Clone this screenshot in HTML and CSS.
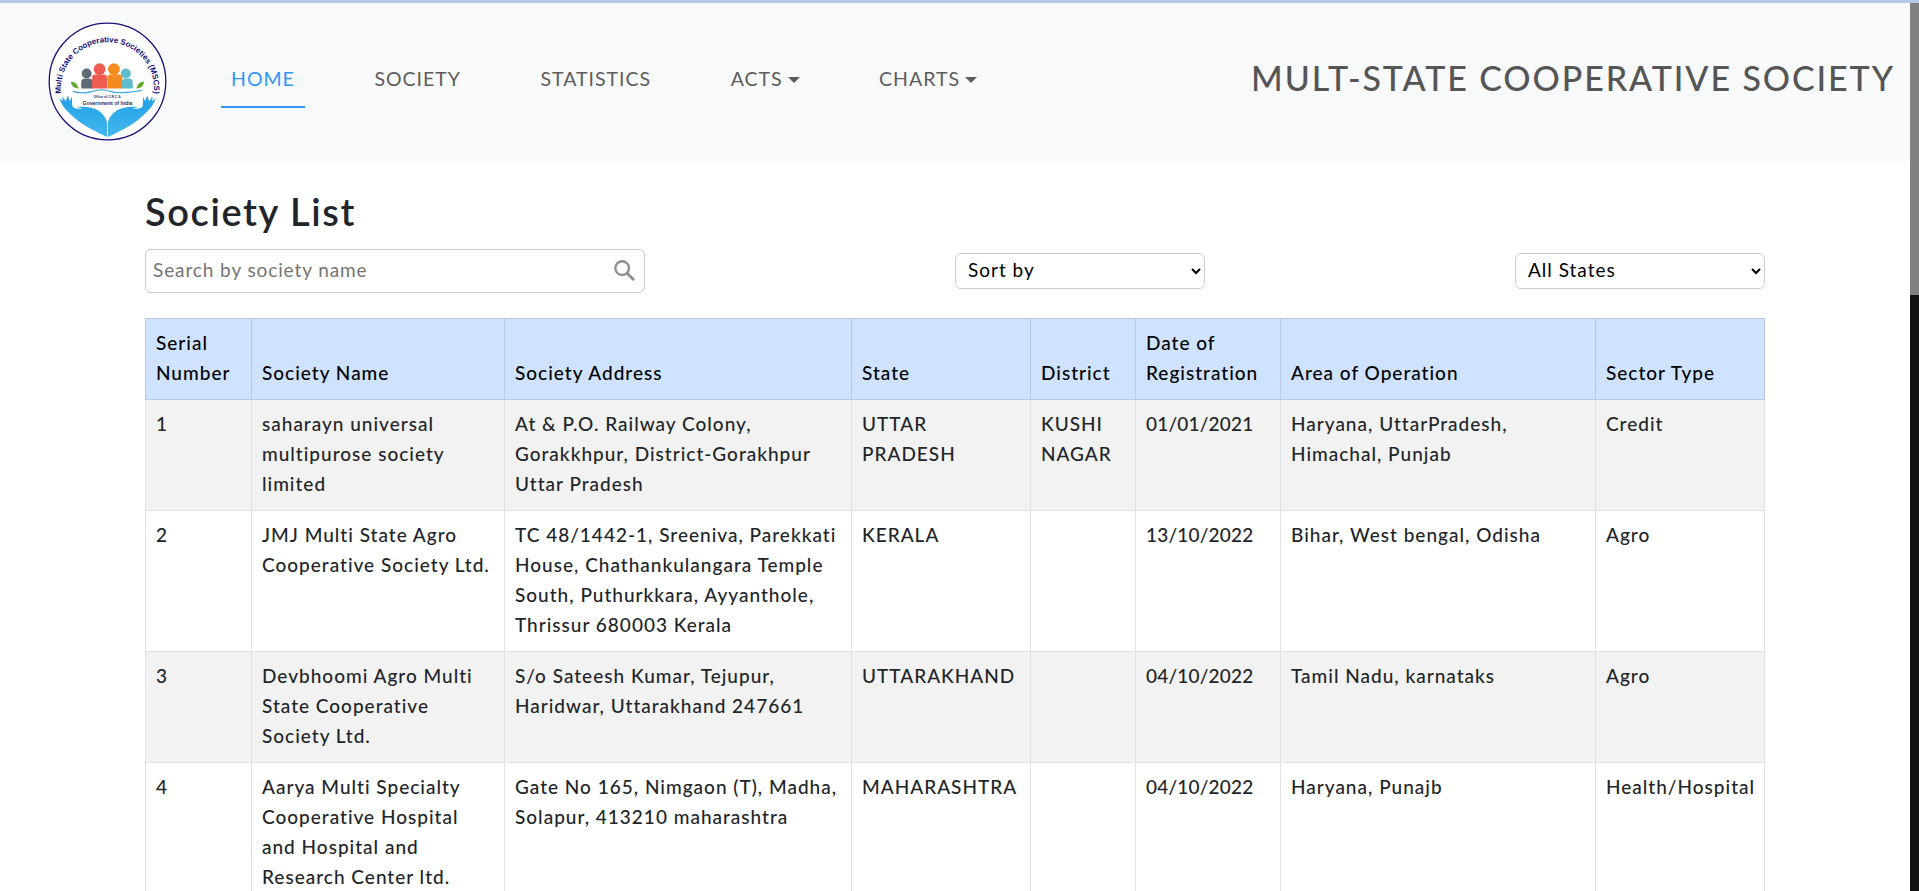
FILE: index.html
```html
<!DOCTYPE html>
<html lang="en">
<head>
<meta charset="utf-8">
<title>Society List</title>
<link rel="stylesheet" href="styles.css">
</head>
<body>
<div class="frame">
<div class="page">
<header class="navbar">
  <svg class="logo" viewBox="0 0 120 120" role="img" aria-label="MSCS logo">
    <defs>
      <path id="arc" d="M14 77 A47 47 0 1 1 106 77"/>
      <linearGradient id="hand" x1="0" y1="0" x2="0" y2="1"><stop offset="0" stop-color="#1f9fe6"/><stop offset="1" stop-color="#45b8ee"/></linearGradient>
    </defs>
    <circle cx="60" cy="60" r="58.8" fill="#fff" stroke="#15107a" stroke-width="1.3"/>
    <text class="logo-ring"><textPath href="#arc" startOffset="50%" text-anchor="middle">Multi State Cooperative Societies (MSCS)</textPath></text>
    <circle cx="39" cy="52" r="5" fill="#5e6b75"/><path d="M33.500 67V61q0-4 4-4h3q5 0 5 4v6z" fill="#5e6b75"/>
    <circle cx="52" cy="47.500" r="6" fill="#ef5b50"/><path d="M44.500 67V56q0-3 3-3h9q3 0 3 3v11z" fill="#ef5b50"/>
    <circle cx="66.500" cy="47.500" r="6" fill="#f58b1f"/><path d="M60 67V56q0-3 3-3h9q3 0 3 3v11z" fill="#f58b1f"/>
    <circle cx="78.500" cy="52" r="5" fill="#5fbccb"/><path d="M74.500 67V61q0-4 4-4h3q4 0 4 4v6z" fill="#5fbccb"/>
    <path d="M23 60q6 0 8 7q-7 0-8-7zM97 60q-6 0-8 7q7 0 8-7z" fill="#62a82e"/>
    <path d="M25 70q10 3 20 0t18 0t32-1" fill="none" stroke="#4aa9e0" stroke-width="1.2"/>
    <text class="logo-sm" x="60" y="76.500" text-anchor="middle">Office of C.R.C.S.</text>
    <text class="logo-md" x="60" y="84" text-anchor="middle">Government of India</text>
    <path d="M59.500 116C50 111 36 105 26 96C19 90 14 85 11.500 77L15 80L14.500 75L18 80L20 74L22 80L24 75L24.500 85C27 88 31 88 35 87L29 86C42 84 56 88 59.500 101z" fill="url(#hand)"/>
    <path d="M60.500 116C70 111 84 105 94 96C101 90 106 85 108.500 77L105 80L105.500 75L102 80L100 74L98 80L96 75L95.500 85C93 88 89 88 85 87L91 86C78 84 64 88 60.500 101z" fill="url(#hand)"/>
  </svg>
  <nav class="nav-links">
    <a class="nav-link active" href="#">HOME</a>
    <a class="nav-link" href="#">SOCIETY</a>
    <a class="nav-link" href="#">STATISTICS</a>
    <a class="nav-link caret" href="#">ACTS</a>
    <a class="nav-link caret" href="#">CHARTS</a>
  </nav>
  <div class="brand">MULT-STATE COOPERATIVE SOCIETY</div>
</header>
<main class="content">
  <h1 class="title">Society List</h1>
  <div class="filters">
    <div class="search">
      <input class="search-input" type="text" placeholder="Search by society name">
      <svg class="search-icon" viewBox="0 0 24 24" aria-hidden="true"><circle cx="10" cy="10" r="7.500" fill="none" stroke="#8f8f8f" stroke-width="2.600"/><path d="M15.500 15.500L22 22" stroke="#8f8f8f" stroke-width="3.200" stroke-linecap="round"/></svg>
    </div>
    <select class="pick pick-sort"><option>Sort by</option></select>
    <select class="pick pick-state"><option>All States</option></select>
  </div>
  <table class="societies">
    <colgroup><col class="c1"><col class="c2"><col class="c3"><col class="c4"><col class="c5"><col class="c6"><col class="c7"><col class="c8"></colgroup>
    <thead>
      <tr><th>Serial Number</th><th>Society Name</th><th>Society Address</th><th>State</th><th>District</th><th>Date of Registration</th><th>Area of Operation</th><th>Sector Type</th></tr>
    </thead>
    <tbody>
      <tr><td>1</td><td>saharayn universal multipurose society limited</td><td>At &amp; P.O. Railway Colony, Gorakkhpur, District-Gorakhpur Uttar Pradesh</td><td>UTTAR PRADESH</td><td>KUSHI NAGAR</td><td class="date">01/01/2021</td><td>Haryana, UttarPradesh, Himachal, Punjab</td><td>Credit</td></tr>
      <tr><td>2</td><td>JMJ Multi State Agro Cooperative Society Ltd.</td><td>TC 48/1442-1, Sreeniva, Parekkati House, Chathankulangara Temple South, Puthurkkara, Ayyanthole, Thrissur 680003 Kerala</td><td>KERALA</td><td></td><td class="date">13/10/2022</td><td>Bihar, West bengal, Odisha</td><td>Agro</td></tr>
      <tr><td>3</td><td>Devbhoomi Agro Multi State Cooperative Society Ltd.</td><td>S/o Sateesh Kumar, Tejupur, Haridwar, Uttarakhand 247661</td><td>UTTARAKHAND</td><td></td><td class="date">04/10/2022</td><td>Tamil Nadu, karnataks</td><td>Agro</td></tr>
      <tr><td>4</td><td>Aarya Multi Specialty Cooperative Hospital and Hospital and Research Center ltd.</td><td>Gate No 165, Nimgaon (T), Madha, Solapur, 413210 maharashtra</td><td>MAHARASHTRA</td><td></td><td class="date">04/10/2022</td><td>Haryana, Punajb</td><td>Health/Hospital</td></tr>
    </tbody>
  </table>
</main>
</div>
<div class="scrollbar"><div class="scroll-thumb"></div></div>
</div>
</body>
</html>
```
FILE: styles.css
```css
* { box-sizing: border-box; }
html, body { margin: 0; height: 100%; overflow: hidden; background: #fff; }
body { font-family: "Lato", "Liberation Sans", sans-serif; color: #212529; }
.frame { height: 891px; display: flex; border-top: 3px solid #b6c8ea; }
.page { flex: 1; min-width: 0; overflow: hidden; }
.scrollbar { width: 9px; background: #111; }
.scroll-thumb { height: 292px; background: #808080; }
.navbar { height: 158px; background: #f8f9fa; display: flex; align-items: center; padding: 0 15px 0 48px; }
.logo { width: 119px; height: 119px; flex: none; margin-top: -2px; }
.logo-ring { font: 700 8px "Liberation Sans", sans-serif; fill: #15107a; }
.logo-sm { font: 700 3.4px "Liberation Sans", sans-serif; fill: #23306b; }
.logo-md { font: 700 5.2px "Liberation Sans", sans-serif; fill: #23306b; }
.nav-links { display: flex; margin-left: 54px; gap: 59.5px; margin-top: -7px; }
.nav-link { display: block; padding: 17px 10px 15px; font-size: 19.5px; line-height: 24px; letter-spacing: 1px; color: #5c5c5c; text-decoration: none; border-bottom: 2px solid transparent; }
.nav-link.active { color: #3296f5; border-bottom-color: #3296f5; }
.caret::after { content: ""; display: inline-block; margin-left: 5px; vertical-align: 3px; border-top: 6px solid currentColor; border-left: 6px solid transparent; border-right: 6px solid transparent; }
.brand { margin-left: auto; font-size: 34px; font-weight: 500; line-height: 40px; letter-spacing: 1.9px; color: #555; white-space: nowrap; margin-top: -9px; }
.content { padding: 0 0 0 145px; width: 1765px; }
.title { margin: 27px 0 0; font-size: 38px; line-height: 46px; font-weight: 600; letter-spacing: 1.6px; color: #212529; }
.filters { display: flex; align-items: center; justify-content: space-between; margin-top: 15px; }
.search { position: relative; width: 500px; height: 44px; }
.search-input { width: 100%; height: 100%; border: 1px solid #ccc; border-radius: 6px; padding: 0 40px 4px 7px; font: 19px "Lato", sans-serif; letter-spacing: .9px; background: #fff; }
.search-input::placeholder { color: #757575; opacity: 1; }
.search-icon { position: absolute; right: 10px; top: 10px; width: 22px; height: 22px; }
.pick { height: 36px; background: #fff; border: 1px solid #ccc; border-radius: 6px; padding: 0 8px 4px; font: 19px "Lato", sans-serif; letter-spacing: 1px; color: #000; }
.pick-sort { width: 250px; }
.pick-state { width: 250px; }
.societies { width: 1619px; margin-top: 25px; border-collapse: collapse; table-layout: fixed; font-size: 19px; line-height: 30px; letter-spacing: 1px; font-weight: 500; color: #212529; }
.c1 { width: 106px; } .c2 { width: 253px; } .c3 { width: 347px; } .c4 { width: 179px; } .c5 { width: 105px; } .c6 { width: 145px; } .c7 { width: 315px; } .c8 { width: 169px; }
.societies th { background: #cfe2ff; border: 1px solid #b6c8ea; padding: 9px 10px 11px; text-align: left; vertical-align: bottom; font-weight: 500; color: #000; }
.societies td { border: 1px solid #dee2e6; padding: 9px 10px 11px; vertical-align: top; color: #212529; }
.societies td.date { letter-spacing: .2px; }
.societies tbody tr:nth-child(odd) td { background: #f2f2f2; }
```
